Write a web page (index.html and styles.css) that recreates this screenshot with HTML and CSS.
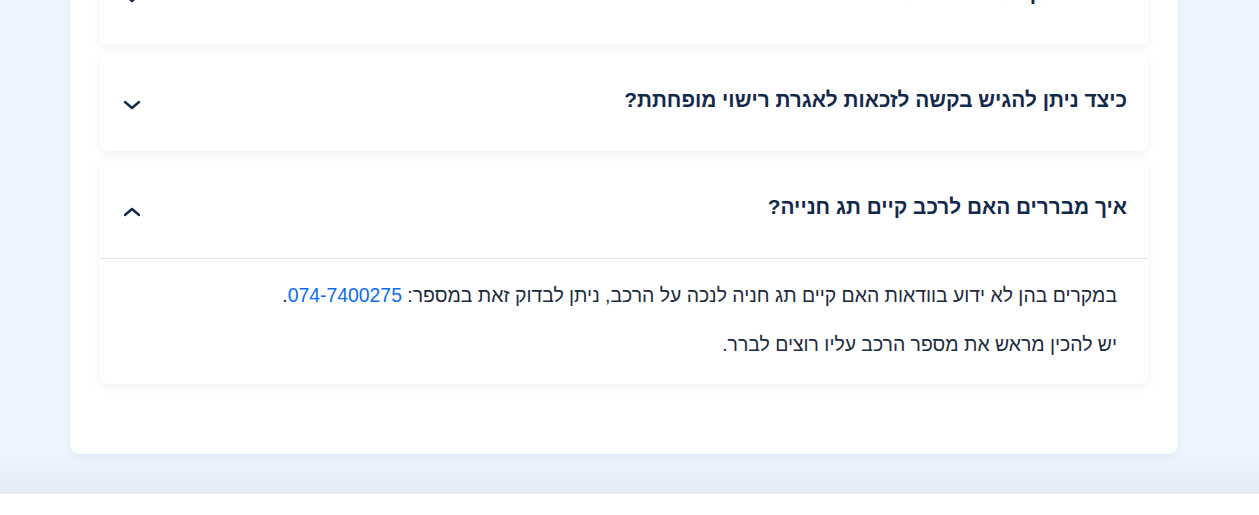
FILE: index.html
```html
<!DOCTYPE html>
<html lang="he" dir="rtl">
    <head>
        <meta charset="utf-8">
        <title>שאלות נפוצות</title>
        <meta name="viewport" content="width=device-width, initial-scale=1">
        <link rel="stylesheet" href="styles.css">
    </head>

    <body>
        <div class="page">
            <div class="card">

                <div class="faq-item">
                    <div class="faq-head">
                        <h3>מי זכאי לקבל תג חניה לנכה ומהם התנאים הנדרשים?</h3>
                        <svg class="chev" viewBox="0 0 20 20"><polyline points="3,7 10,13 17,7"/></svg>
                    </div>
                </div>

                <div class="faq-item">
                    <div class="faq-head">
                        <h3>כיצד ניתן להגיש בקשה לזכאות לאגרת רישוי מופחתת?</h3>
                        <svg class="chev" viewBox="0 0 20 20"><polyline points="3,7 10,13 17,7"/></svg>
                    </div>
                </div>

                <div class="faq-item open">
                    <div class="faq-head">
                        <h3>איך מבררים האם לרכב קיים תג חנייה?</h3>
                        <svg class="chev" viewBox="0 0 20 20"><polyline points="3,13 10,7 17,13"/></svg>
                    </div>
                    <div class="faq-body">
                        <p>במקרים בהן לא ידוע בוודאות האם קיים תג חניה לנכה על הרכב, ניתן לבדוק זאת במספר: <a href="#">074-7400275</a>.</p>
                        <p>יש להכין מראש את מספר הרכב עליו רוצים לברר.</p>
                    </div>
                </div>

            </div>
        </div>
    </body>
</html>
```

FILE: styles.css
```css
html {
    background: #ffffff;
}

body {
    margin: 0;
    font-family: "Liberation Sans", Arial, sans-serif;
    color: #1c2b40;
}

.page {
    margin-top: -83px; /* page is scrolled down a bit */
    padding: 0 81px 40px 70px;
    background: linear-gradient(to bottom, #eef5fe 0%, #eef5fe 93%, #e5ebf5 100%);
}

.card {
    background: #fff;
    border-radius: 0 0 10px 10px;
    padding: 30px 30px 70px;
    display: flex;
    flex-direction: column;
    gap: 10px;
    box-shadow: 0 4px 10px rgba(40, 60, 110, 0.06);
}

.faq-item {
    background: #fff;
    border-radius: 6px;
    box-shadow: 0 2px 10px rgba(0, 0, 0, 0.06);
}

.faq-head {
    height: 97px;
    padding: 0 21px 0 22px;
    display: flex;
    align-items: center;
    justify-content: space-between;
}

.faq-head h3 {
    margin: 0 0 6px;
    font-size: 20.8px;
    font-weight: bold;
    color: #13294b;
}

.chev {
    width: 20px;
    height: 20px;
    margin-top: 4px;
    fill: none;
    stroke: #13294b;
    stroke-width: 2.4;
    stroke-linecap: round;
    stroke-linejoin: round;
}

.open .chev {
    margin-top: 4px;
}

.faq-body {
    border-top: 1px solid #dde4ec;
    padding: 24px 31px 28px;
}

.faq-body p {
    margin: 0 0 25px;
    font-size: 19.4px;
    line-height: 24px;
    color: #1c2a3e;
}

.faq-body p:last-child {
    margin-bottom: 0;
}

.faq-body a {
    color: #0b6cf5;
    text-decoration: none;
}
```
